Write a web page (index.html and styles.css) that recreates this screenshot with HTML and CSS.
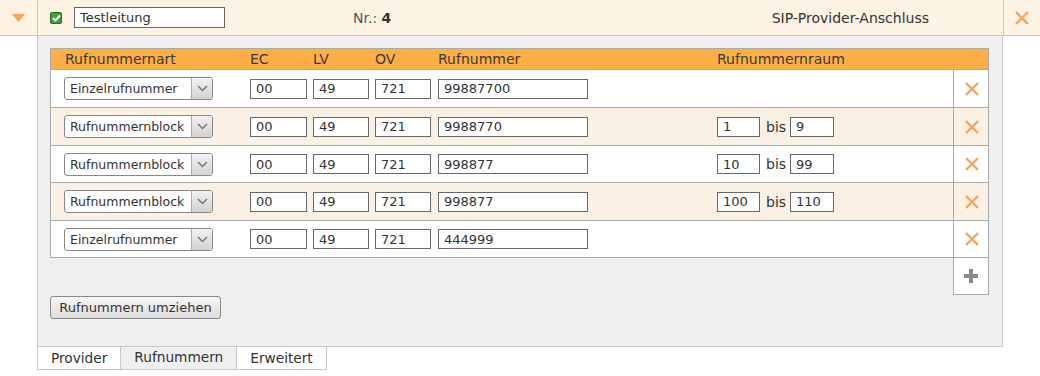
FILE: index.html
```html
<!DOCTYPE html>
<html>
<head>
    <title>SIP-Provider-Anschluss</title>
    <link rel="stylesheet" href="styles.css">
</head>
<body>

<div class="line-head">
    <div class="toggle">
        <svg width="13" height="8" viewBox="0 0 13 8"><path d="M0 0 H13 L6.5 8 Z" fill="#f7a54e"/></svg>
    </div>
    <div class="head-main">
        <span class="check">
            <svg width="9" height="8" viewBox="0 0 9 8"><path d="M1 4 L3.5 6.5 L8 1.5" fill="none" stroke="#fff" stroke-width="2"/></svg>
        </span>
        <input class="field name" type="text" value="Testleitung">
        <span class="nr">Nr.: <b>4</b></span>
        <span class="title">SIP-Provider-Anschluss</span>
    </div>
    <div class="remove">
        <svg width="16" height="16" viewBox="0 0 16 16"><path d="M2 2 L14 14 M14 2 L2 14" stroke="#f7a35c" stroke-width="2.4"/></svg>
    </div>
</div>

<div class="panel">
    <div class="numbers">
        <div class="grid grid-head">
            <div class="c-type">Rufnummernart</div>
            <div>EC</div>
            <div>LV</div>
            <div>OV</div>
            <div>Rufnummer</div>
            <div>Rufnummernraum</div>
            <div></div>
        </div>

        <div class="grid row">
            <div class="c-type"><span class="select"><span class="select-text">Einzelrufnummer</span><span class="select-btn"><svg width="11" height="7" viewBox="0 0 11 7"><path d="M1 1 L5.5 5.5 L10 1" fill="none" stroke="#777" stroke-width="1.5"/></svg></span></span></div>
            <div><input class="field ec" value="00"></div>
            <div><input class="field lv" value="49"></div>
            <div><input class="field ov" value="721"></div>
            <div><input class="field num" value="99887700"></div>
            <div></div>
            <div class="del"><svg width="16" height="16" viewBox="0 0 16 16"><path d="M2 2 L14 14 M14 2 L2 14" stroke="#f7a35c" stroke-width="2.4"/></svg></div>
        </div>

        <div class="grid row alt">
            <div class="c-type"><span class="select"><span class="select-text">Rufnummernblock</span><span class="select-btn"><svg width="11" height="7" viewBox="0 0 11 7"><path d="M1 1 L5.5 5.5 L10 1" fill="none" stroke="#777" stroke-width="1.5"/></svg></span></span></div>
            <div><input class="field ec" value="00"></div>
            <div><input class="field lv" value="49"></div>
            <div><input class="field ov" value="721"></div>
            <div><input class="field num" value="9988770"></div>
            <div class="range"><input class="field from" value="1"><span class="bis">bis</span><input class="field to" value="9"></div>
            <div class="del"><svg width="16" height="16" viewBox="0 0 16 16"><path d="M2 2 L14 14 M14 2 L2 14" stroke="#f7a35c" stroke-width="2.4"/></svg></div>
        </div>

        <div class="grid row short">
            <div class="c-type"><span class="select"><span class="select-text">Rufnummernblock</span><span class="select-btn"><svg width="11" height="7" viewBox="0 0 11 7"><path d="M1 1 L5.5 5.5 L10 1" fill="none" stroke="#777" stroke-width="1.5"/></svg></span></span></div>
            <div><input class="field ec" value="00"></div>
            <div><input class="field lv" value="49"></div>
            <div><input class="field ov" value="721"></div>
            <div><input class="field num" value="998877"></div>
            <div class="range"><input class="field from" value="10"><span class="bis">bis</span><input class="field to" value="99"></div>
            <div class="del"><svg width="16" height="16" viewBox="0 0 16 16"><path d="M2 2 L14 14 M14 2 L2 14" stroke="#f7a35c" stroke-width="2.4"/></svg></div>
        </div>

        <div class="grid row alt">
            <div class="c-type"><span class="select"><span class="select-text">Rufnummernblock</span><span class="select-btn"><svg width="11" height="7" viewBox="0 0 11 7"><path d="M1 1 L5.5 5.5 L10 1" fill="none" stroke="#777" stroke-width="1.5"/></svg></span></span></div>
            <div><input class="field ec" value="00"></div>
            <div><input class="field lv" value="49"></div>
            <div><input class="field ov" value="721"></div>
            <div><input class="field num" value="998877"></div>
            <div class="range"><input class="field from" value="100"><span class="bis">bis</span><input class="field to" value="110"></div>
            <div class="del"><svg width="16" height="16" viewBox="0 0 16 16"><path d="M2 2 L14 14 M14 2 L2 14" stroke="#f7a35c" stroke-width="2.4"/></svg></div>
        </div>

        <div class="grid row short">
            <div class="c-type"><span class="select"><span class="select-text">Einzelrufnummer</span><span class="select-btn"><svg width="11" height="7" viewBox="0 0 11 7"><path d="M1 1 L5.5 5.5 L10 1" fill="none" stroke="#777" stroke-width="1.5"/></svg></span></span></div>
            <div><input class="field ec" value="00"></div>
            <div><input class="field lv" value="49"></div>
            <div><input class="field ov" value="721"></div>
            <div><input class="field num" value="444999"></div>
            <div></div>
            <div class="del"><svg width="16" height="16" viewBox="0 0 16 16"><path d="M2 2 L14 14 M14 2 L2 14" stroke="#f7a35c" stroke-width="2.4"/></svg></div>
        </div>
    </div>

    <div class="add-line">
        <div class="add">
            <svg width="16" height="16" viewBox="0 0 16 16"><path d="M6 1 H10 V6 H15 V10 H10 V15 H6 V10 H1 V6 H6 Z" fill="#8a8a8a"/></svg>
        </div>
    </div>

    <button class="btn">Rufnummern umziehen</button>
</div>

<div class="tabs">
    <div class="tab">Provider</div>
    <div class="tab active">Rufnummern</div>
    <div class="tab">Erweitert</div>
</div>

</body>
</html>
```

FILE: styles.css
```css
body { margin: 0; font-family: "DejaVu Sans", Verdana, sans-serif; font-size: 14px; color: #333; background: #fff; }

.line-head { display: flex; height: 35px; background: #fdf3e5; border-bottom: 1px solid #c8c8c8; }
.line-head .toggle { width: 37px; border-right: 1px solid #c8c8c8; display: flex; align-items: center; justify-content: center; }
.line-head .head-main { flex: 1; display: flex; align-items: center; padding-left: 12px; }
.line-head .remove { width: 36px; border-left: 1px solid #c8c8c8; display: flex; align-items: center; justify-content: center; }

.check { width: 12px; height: 12px; box-sizing: border-box; border: 1px solid #2d6b2d; border-radius: 2px; background: #38a538; display: flex; align-items: center; justify-content: center; }
.field { box-sizing: border-box; height: 20px; border: 1px solid #666; background: #fff; font-family: "DejaVu Sans", Verdana, sans-serif; font-size: 13px; color: #333; padding: 0 0 0 5px; margin: 0; outline: none; }
.field.name { width: 151px; height: 21px; margin-left: 12px; }
.nr { margin-left: 128px; color: #555; }
.nr b { color: #333; }
.title { margin-left: auto; margin-right: 74px; }

.panel { margin-left: 37px; width: 966px; box-sizing: border-box; background: #efefef; border-left: 1px solid #c8c8c8; border-right: 1px solid #c8c8c8; border-bottom: 1px solid #c8c8c8; padding: 12px 13px 27px 12px; }

.numbers { border: 1px solid #aaa; border-bottom: none; background: #fff; }
.grid { display: grid; grid-template-columns: 199px 63px 62px 63px 279px 236px 36px; align-items: center; }
.grid-head { height: 20px; background: #fdaf45; color: #3a3a3a; border-bottom: 1px solid #aaa; }
.grid-head .c-type { padding-left: 14px; }
.row { height: 37px; border-bottom: 1px solid #aaa; }
.row.short { height: 36px; }
.row.alt { background: #fbf0e4; }
.row .c-type { padding-left: 13px; }
.row .del { height: 100%; border-left: 1px solid #aaa; display: flex; align-items: center; justify-content: center; }

.select { display: flex; width: 149px; height: 23px; box-sizing: border-box; border: 1px solid #888; border-radius: 3px; background: #fff; font-size: 12.5px; overflow: hidden; }
.select-text { flex: 1; padding-left: 5px; line-height: 21px; white-space: nowrap; }
.select-btn { width: 20px; flex: none; border-left: 1px solid #aaa; background: linear-gradient(#f2f2f2, #d2d2d2); display: flex; align-items: center; justify-content: center; }

.field.ec { width: 57px; }
.field.lv, .field.ov { width: 56px; }
.field.num { width: 150px; }
.range { display: flex; align-items: center; }
.field.from { width: 43px; }
.field.to { width: 44px; }
.bis { margin: 0 4px 0 6px; font-size: 14px; }

.add-line { display: flex; justify-content: flex-end; }
.add { width: 36px; height: 37px; box-sizing: border-box; border: 1px solid #aaa; border-top: none; background: #fff; display: flex; align-items: center; justify-content: center; }

.btn { display: block; margin-top: 1px; width: 171px; height: 23px; border: 1px solid #888; border-radius: 3px; background: linear-gradient(#f7f7f7, #dcdcdc); font-family: "DejaVu Sans", Verdana, sans-serif; font-size: 13px; color: #333; padding: 0; }

.tabs { display: flex; margin-left: 37px; }
.tab { height: 22px; padding: 0 13px; font-size: 13.7px; line-height: 23px; border: 1px solid #c8c8c8; border-top: none; border-left: none; background: #fff; }
.tab:first-child { border-left: 1px solid #c8c8c8; }
.tab.active { background: #efefef; line-height: 21px; }
```
